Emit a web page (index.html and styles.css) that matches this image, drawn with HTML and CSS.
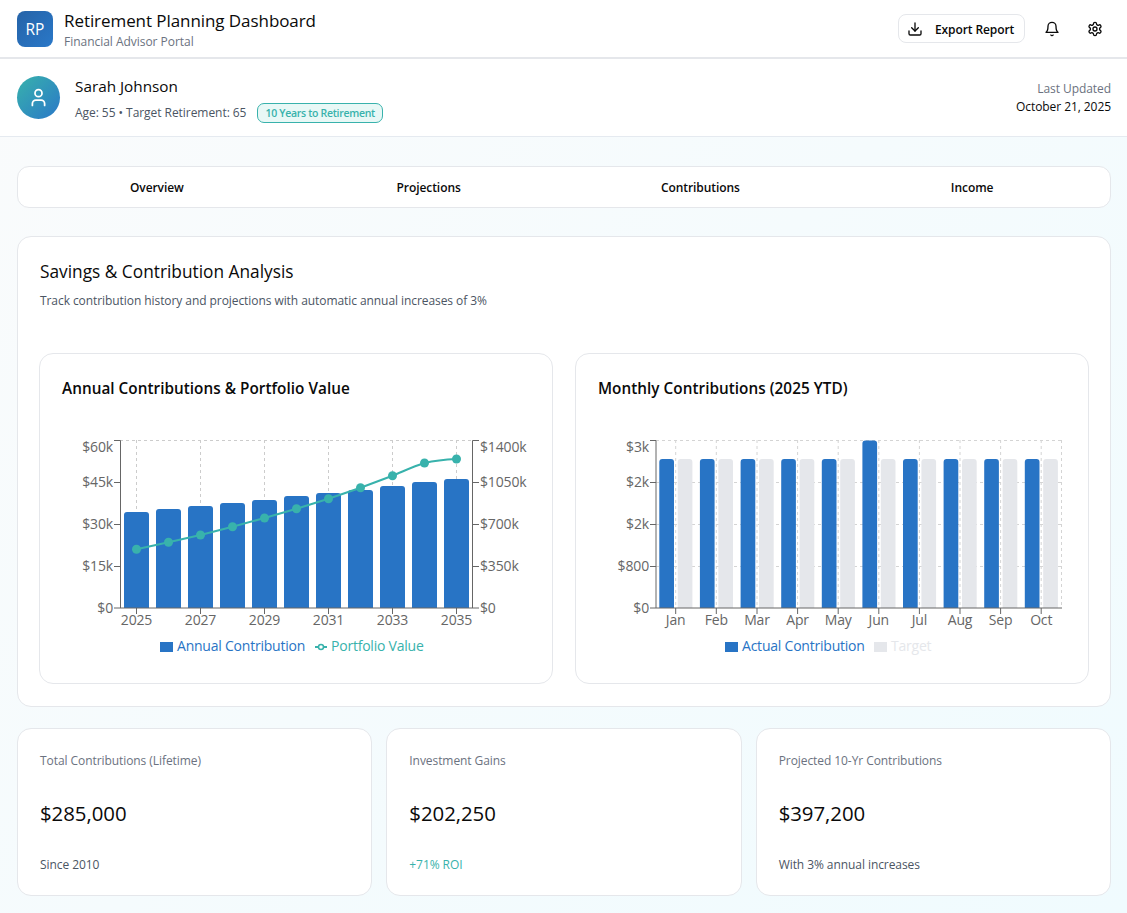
FILE: index.html
```html
<!DOCTYPE html>
<html lang="en">
<head>
<meta charset="utf-8">
<title>Retirement Planning Dashboard</title>
<link rel="stylesheet" href="styles.css">
</head>
<body>
<header class="topbar">
  <div class="brand">
    <div class="logo">RP</div>
    <div class="brand-text">
      <h1>Retirement Planning Dashboard</h1>
      <p>Financial Advisor Portal</p>
    </div>
  </div>
  <div class="actions">
    <button class="export">
      <svg class="icon" viewBox="0 0 24 24"><path d="M21 15v4a2 2 0 0 1-2 2H5a2 2 0 0 1-2-2v-4"/><polyline points="7 10 12 15 17 10"/><line x1="12" y1="15" x2="12" y2="3"/></svg>
      <span class="export-label">Export Report</span>
    </button>
    <button class="icon-btn">
      <svg class="icon" viewBox="0 0 24 24"><path d="M6 8a6 6 0 0 1 12 0c0 7 3 9 3 9H3s3-2 3-9"/><path d="M10.3 21a1.94 1.94 0 0 0 3.4 0"/></svg>
    </button>
    <button class="icon-btn">
      <svg class="icon" viewBox="0 0 24 24"><path d="M12.22 2h-.44a2 2 0 0 0-2 2v.18a2 2 0 0 1-1 1.73l-.43.25a2 2 0 0 1-2 0l-.15-.08a2 2 0 0 0-2.73.73l-.22.38a2 2 0 0 0 .73 2.73l.15.1a2 2 0 0 1 1 1.72v.51a2 2 0 0 1-1 1.74l-.15.09a2 2 0 0 0-.73 2.73l.22.38a2 2 0 0 0 2.73.73l.15-.08a2 2 0 0 1 2 0l.43.25a2 2 0 0 1 1 1.73V20a2 2 0 0 0 2 2h.44a2 2 0 0 0 2-2v-.18a2 2 0 0 1 1-1.73l.43-.25a2 2 0 0 1 2 0l.15.08a2 2 0 0 0 2.73-.73l.22-.39a2 2 0 0 0-.73-2.73l-.15-.08a2 2 0 0 1-1-1.74v-.5a2 2 0 0 1 1-1.74l.15-.09a2 2 0 0 0 .73-2.73l-.22-.38a2 2 0 0 0-2.73-.73l-.15.08a2 2 0 0 1-2 0l-.43-.25a2 2 0 0 1-1-1.73V4a2 2 0 0 0-2-2z"/><circle cx="12" cy="12" r="3"/></svg>
    </button>
  </div>
</header>

<section class="client">
  <div class="client-main">
    <div class="avatar">
      <svg class="avatar-icon" viewBox="0 0 24 24"><path d="M19 21v-2a4 4 0 0 0-4-4H9a4 4 0 0 0-4 4v2"/><circle cx="12" cy="7" r="4"/></svg>
    </div>
    <div class="client-text">
      <h2>Sarah Johnson</h2>
      <div class="client-meta">
        <span>Age: 55 • Target Retirement: 65</span>
        <span class="badge">10 Years to Retirement</span>
      </div>
    </div>
  </div>
  <div class="updated">
    <span class="updated-label">Last Updated</span>
    <span class="updated-date">October 21, 2025</span>
  </div>
</section>

<main class="content">
  <nav class="tabs">
    <a class="tab">Overview</a>
    <a class="tab">Projections</a>
    <a class="tab">Contributions</a>
    <a class="tab">Income</a>
  </nav>

  <section class="panel">
    <h3 class="panel-title">Savings &amp; Contribution Analysis</h3>
    <p class="panel-sub">Track contribution history and projections with automatic annual increases of 3%</p>
    <div class="charts">
      <article class="chart-card">
        <h4>Annual Contributions &amp; Portfolio Value</h4>
        <svg class="chart" viewBox="62 420 470 250">
          <g class="grid">
            <line x1="120" y1="440.5" x2="473" y2="440.5"/>
            <line x1="136.5" y1="440" x2="136.5" y2="608"/>
            <line x1="200.5" y1="440" x2="200.5" y2="608"/>
            <line x1="264.5" y1="440" x2="264.5" y2="608"/>
            <line x1="328.5" y1="440" x2="328.5" y2="608"/>
            <line x1="392.5" y1="440" x2="392.5" y2="608"/>
            <line x1="456.5" y1="440" x2="456.5" y2="608"/>
          </g>
          <g class="bar-blue">
            <path d="M124 608V515a3 3 0 0 1 3-3h19a3 3 0 0 1 3 3v93z"/>
            <path d="M156 608V512a3 3 0 0 1 3-3h19a3 3 0 0 1 3 3v96z"/>
            <path d="M188 608V509a3 3 0 0 1 3-3h19a3 3 0 0 1 3 3v99z"/>
            <path d="M220 608V506a3 3 0 0 1 3-3h19a3 3 0 0 1 3 3v102z"/>
            <path d="M252 608V503a3 3 0 0 1 3-3h19a3 3 0 0 1 3 3v105z"/>
            <path d="M284 608V499a3 3 0 0 1 3-3h19a3 3 0 0 1 3 3v109z"/>
            <path d="M316 608V496a3 3 0 0 1 3-3h19a3 3 0 0 1 3 3v112z"/>
            <path d="M348 608V493a3 3 0 0 1 3-3h19a3 3 0 0 1 3 3v115z"/>
            <path d="M380 608V489a3 3 0 0 1 3-3h19a3 3 0 0 1 3 3v119z"/>
            <path d="M412 608V485a3 3 0 0 1 3-3h19a3 3 0 0 1 3 3v123z"/>
            <path d="M444 608V482a3 3 0 0 1 3-3h19a3 3 0 0 1 3 3v126z"/>
          </g>
          <g class="axis">
            <path d="M114 440.5h6.5V608M114 482.5h6M114 524.5h6M114 566.5h6M114 608h359M136.5 608v6M200.5 608v6M264.5 608v6M328.5 608v6M392.5 608v6M456.5 608v6"/>
            <path d="M479 440.5h-6.5V608M473 482.5h6M473 524.5h6M473 566.5h6M473 608h6"/>
          </g>
          <path class="line-teal" d="M136.5 549.3L168.5 542.3L200.5 535L232.5 526.7L264.5 518L296.5 508.7L328.5 498.7L360.5 487.7L392.5 475.7C403 471.5 413 466.5 424.5 463C435 460.5 445 459.5 456.5 459"/>
          <g class="dot-teal">
            <circle cx="136.5" cy="549.3" r="4.5"/><circle cx="168.5" cy="542.3" r="4.5"/><circle cx="200.5" cy="535" r="4.5"/><circle cx="232.5" cy="526.7" r="4.5"/><circle cx="264.5" cy="518" r="4.5"/><circle cx="296.5" cy="508.7" r="4.5"/><circle cx="328.5" cy="498.7" r="4.5"/><circle cx="360.5" cy="487.7" r="4.5"/><circle cx="392.5" cy="475.7" r="4.5"/><circle cx="424.5" cy="463" r="4.5"/><circle cx="456.5" cy="459" r="4.5"/>
          </g>
          <g class="tick end">
            <text x="113" y="452">$60k</text><text x="113" y="487">$45k</text><text x="113" y="529">$30k</text><text x="113" y="571">$15k</text><text x="113" y="613">$0</text>
          </g>
          <g class="tick">
            <text x="480" y="452">$1400k</text><text x="480" y="487">$1050k</text><text x="480" y="529">$700k</text><text x="480" y="571">$350k</text><text x="480" y="613">$0</text>
          </g>
          <g class="tick mid">
            <text x="136.5" y="625">2025</text><text x="200.5" y="625">2027</text><text x="264.5" y="625">2029</text><text x="328.5" y="625">2031</text><text x="392.5" y="625">2033</text><text x="456.5" y="625">2035</text>
          </g>
          <rect class="swatch-blue" x="160" y="642" width="13" height="10"/>
          <text class="legend legend-blue" x="177" y="651">Annual Contribution</text>
          <line class="line-teal" x1="315" y1="647" x2="327" y2="647"/>
          <circle class="legend-dot" cx="321" cy="647" r="2.5"/>
          <text class="legend legend-teal" x="331" y="651">Portfolio Value</text>
        </svg>
      </article>

      <article class="chart-card">
        <h4>Monthly Contributions (2025 YTD)</h4>
        <svg class="chart" viewBox="598 420 470 250">
          <g class="grid grid-soft">
            <path d="M656 440.5H1061.5M656 482.5H1061.5M656 524.5H1061.5M656 566.5H1061.5M675.7 440V608M716.3 440V608M757 440V608M797.6 440V608M838.2 440V608M878.8 440V608M919.4 440V608M960 440V608M1000.6 440V608M1041.2 440V608M1061.5 440V608"/>
          </g>
          <g class="bar-blue">
            <path d="M659.3 608V462a3 3 0 0 1 3-3h8.7a3 3 0 0 1 3 3v146z"/>
            <path d="M699.9 608V462a3 3 0 0 1 3-3h8.7a3 3 0 0 1 3 3v146z"/>
            <path d="M740.6 608V462a3 3 0 0 1 3-3h8.7a3 3 0 0 1 3 3v146z"/>
            <path d="M781.2 608V462a3 3 0 0 1 3-3h8.7a3 3 0 0 1 3 3v146z"/>
            <path d="M821.8 608V462a3 3 0 0 1 3-3h8.7a3 3 0 0 1 3 3v146z"/>
            <path d="M862.4 608V443.5a3 3 0 0 1 3-3h8.7a3 3 0 0 1 3 3V608z"/>
            <path d="M903 608V462a3 3 0 0 1 3-3h8.7a3 3 0 0 1 3 3v146z"/>
            <path d="M943.6 608V462a3 3 0 0 1 3-3h8.7a3 3 0 0 1 3 3v146z"/>
            <path d="M984.2 608V462a3 3 0 0 1 3-3h8.7a3 3 0 0 1 3 3v146z"/>
            <path d="M1024.8 608V462a3 3 0 0 1 3-3h8.7a3 3 0 0 1 3 3v146z"/>
          </g>
          <g class="bar-grey">
            <path d="M677.7 608V462a3 3 0 0 1 3-3h8.7a3 3 0 0 1 3 3v146z"/>
            <path d="M718.3 608V462a3 3 0 0 1 3-3h8.7a3 3 0 0 1 3 3v146z"/>
            <path d="M759 608V462a3 3 0 0 1 3-3h8.7a3 3 0 0 1 3 3v146z"/>
            <path d="M799.6 608V462a3 3 0 0 1 3-3h8.7a3 3 0 0 1 3 3v146z"/>
            <path d="M840.2 608V462a3 3 0 0 1 3-3h8.7a3 3 0 0 1 3 3v146z"/>
            <path d="M880.8 608V462a3 3 0 0 1 3-3h8.7a3 3 0 0 1 3 3v146z"/>
            <path d="M921.4 608V462a3 3 0 0 1 3-3h8.7a3 3 0 0 1 3 3v146z"/>
            <path d="M962 608V462a3 3 0 0 1 3-3h8.7a3 3 0 0 1 3 3v146z"/>
            <path d="M1002.6 608V462a3 3 0 0 1 3-3h8.7a3 3 0 0 1 3 3v146z"/>
            <path d="M1043.2 608V462a3 3 0 0 1 3-3h8.7a3 3 0 0 1 3 3v146z"/>
          </g>
          <g class="axis">
            <path d="M650 440.5h6V608M650 482.5h6M650 524.5h6M650 566.5h6M650 608H1062M675.7 608v6M716.3 608v6M757 608v6M797.6 608v6M838.2 608v6M878.8 608v6M919.4 608v6M960 608v6M1000.6 608v6M1041.2 608v6"/>
          </g>
          <g class="tick end">
            <text x="649" y="452">$3k</text><text x="649" y="487">$2k</text><text x="649" y="529">$2k</text><text x="649" y="571">$800</text><text x="649" y="613">$0</text>
          </g>
          <g class="tick mid">
            <text x="675.7" y="625">Jan</text><text x="716.3" y="625">Feb</text><text x="757" y="625">Mar</text><text x="797.6" y="625">Apr</text><text x="838.2" y="625">May</text><text x="878.8" y="625">Jun</text><text x="919.4" y="625">Jul</text><text x="960" y="625">Aug</text><text x="1000.6" y="625">Sep</text><text x="1041.2" y="625">Oct</text>
          </g>
          <rect class="swatch-blue" x="725" y="642" width="13" height="10"/>
          <text class="legend legend-blue" x="742" y="651">Actual Contribution</text>
          <rect class="swatch-grey" x="874" y="642" width="13" height="10"/>
          <text class="legend legend-grey" x="891" y="651">Target</text>
        </svg>
      </article>
    </div>
  </section>

  <section class="stats">
    <article class="stat">
      <p class="stat-label">Total Contributions (Lifetime)</p>
      <p class="stat-value">$285,000</p>
      <p class="stat-note">Since 2010</p>
    </article>
    <article class="stat">
      <p class="stat-label">Investment Gains</p>
      <p class="stat-value">$202,250</p>
      <p class="stat-note stat-good">+71% ROI</p>
    </article>
    <article class="stat">
      <p class="stat-label">Projected 10-Yr Contributions</p>
      <p class="stat-value">$397,200</p>
      <p class="stat-note">With 3% annual increases</p>
    </article>
  </section>
</main>
</body>
</html>
```
FILE: styles.css
```css
* { box-sizing: border-box; }
html, body { margin: 0; padding: 0; }
body {
  font-family: "Open Sans", "Noto Sans", "Liberation Sans", sans-serif;
  color: #0a0a0a;
  background: linear-gradient(135deg, #fafbfc 0%, #f0fbfe 100%);
  min-height: 913px;
  letter-spacing: -0.07px;
}
h1, h2, h3, h4, p { margin: 0; font-weight: 400; }

.topbar {
  height: 59px;
  background: #fff;
  border-bottom: 2px solid #e5e7eb;
  padding: 0 11px 0 17px;
  display: flex;
  align-items: center;
  justify-content: space-between;
}
.brand { display: flex; align-items: center; gap: 11px; }
.logo {
  width: 36px; height: 36px;
  border-radius: 8px;
  background: linear-gradient(135deg, #2563a8, #2a78c8);
  color: #fff;
  font-size: 15.5px;
  display: flex; align-items: center; justify-content: center;
}
.brand-text { padding-top: 2px; }
.brand-text h1 { font-size: 17px; line-height: 24px; letter-spacing: -0.07px; }
.brand-text p { font-size: 12px; line-height: 18px; color: #6b7280; letter-spacing: -0.03px; }
.actions { display: flex; align-items: center; }
.export {
  height: 29px;
  width: 127px;
  border: 1px solid #e5e7eb;
  border-radius: 8px;
  background: #fff;
  padding: 0 0 0 8px;
  margin-right: 5px;
  display: flex; align-items: center; gap: 12px;
  font: 600 12px "Open Sans", sans-serif;
  letter-spacing: -0.1px;
  color: #0a0a0a;
}
.export-label { padding-top: 1px; }
.icon-btn {
  width: 43px; height: 29px;
  border: 0; background: transparent; padding: 0;
  display: flex; align-items: center; justify-content: center;
}
.icon {
  width: 16px; height: 16px;
  fill: none; stroke: #0a0a0a; stroke-width: 2;
  stroke-linecap: round; stroke-linejoin: round;
}

.client {
  height: 78px;
  background: #fff;
  border-bottom: 1px solid #e5eaf0;
  padding: 0 16px 0 17px;
  display: flex;
  align-items: center;
  justify-content: space-between;
}
.client-main { display: flex; align-items: center; gap: 15px; }
.avatar {
  width: 43px; height: 43px;
  border-radius: 50%;
  background: linear-gradient(135deg, #38b2ac, #2a78c8);
  display: flex; align-items: center; justify-content: center;
}
.avatar-icon {
  width: 21px; height: 21px;
  fill: none; stroke: #fff; stroke-width: 2;
  stroke-linecap: round; stroke-linejoin: round;
}
.client-text h2 { font-size: 15.3px; line-height: 22px; margin-bottom: 5px; letter-spacing: 0; }
.client-meta {
  display: flex; align-items: center; gap: 11px;
  font-size: 12px; line-height: 20px; color: #4b5563;
  padding-top: 1px;
  margin-bottom: -2px;
  letter-spacing: -0.05px;
}
.badge {
  height: 20px;
  padding: 0 7px;
  border: 1px solid #38b2ac;
  border-radius: 7px;
  background: #e8f8f6;
  color: #38b2ac;
  font-size: 10.5px;
  font-weight: 600;
  line-height: 18px;
  letter-spacing: -0.3px;
}
.updated { display: flex; flex-direction: column; align-items: flex-end; }
.updated-label { font-size: 12px; line-height: 18px; color: #6b7280; }
.updated-date { font-size: 12px; line-height: 18px; color: #0a0a0a; }

.content { padding: 29px 16px 17px 17px; }
.tabs {
  height: 42px;
  background: #fff;
  border: 1px solid #e5e7eb;
  border-radius: 12px;
  padding: 0 2px 0 3px;
  display: grid;
  grid-template-columns: repeat(4, 1fr);
  align-items: center;
  text-align: center;
  margin-bottom: 28px;
}
.tab { font-size: 12px; font-weight: 600; color: #0a0a0a; }

.panel {
  height: 471px;
  background: #fff;
  border: 1px solid #e5e7eb;
  border-radius: 14px;
  padding: 22px 21px;
  margin-bottom: 21px;
}
.panel-title { font-size: 17.3px; line-height: 26px; margin: 0 0 7px 1px; letter-spacing: 0; }
.panel-sub { font-size: 12px; line-height: 18px; color: #4b5563; margin: 0 0 43px 1px; }
.charts { display: grid; grid-template-columns: minmax(0, 1fr) minmax(0, 1fr); gap: 22px; }
.chart-card {
  height: 331px;
  border: 1px solid #e5e7eb;
  border-radius: 14px;
  padding: 22px 22px 0;
}
.chart-card h4 {
  font-size: 15.3px; font-weight: 600; line-height: 24px;
  margin-bottom: 20px;
  letter-spacing: 0.03px;
}
.chart { display: block; width: 470px; height: 250px; }
.grid line, .grid path { stroke: #ccc; stroke-width: 1; stroke-dasharray: 3 3; fill: none; }
.grid-soft path { stroke: #d4d4d4; }
.axis path { stroke: #666; stroke-width: 1; fill: none; }
.bar-blue path { fill: #2874c5; }
.bar-grey path { fill: #e5e7eb; }
.line-teal { fill: none; stroke: #38b2ac; stroke-width: 2; }
.dot-teal circle { fill: #38b2ac; }
.legend-dot { fill: #fff; stroke: #38b2ac; stroke-width: 1.5; }
.tick text { font-size: 14px; fill: #666; letter-spacing: -0.15px; }
.tick.end text { text-anchor: end; }
.tick.mid text { text-anchor: middle; }
.swatch-blue { fill: #2874c5; }
.swatch-grey { fill: #e5e7eb; }
.legend { font-size: 14px; letter-spacing: -0.22px; }
.legend-blue { fill: #2874c5; }
.legend-teal { fill: #38b2ac; }
.legend-grey { fill: #e5e7eb; }

.stats { display: grid; grid-template-columns: repeat(3, 1fr); gap: 14px; }
.stat {
  height: 168px;
  background: #fff;
  border: 1px solid #e5e7eb;
  border-radius: 14px;
  padding: 23px 22px 21px;
  display: flex; flex-direction: column; justify-content: space-between;
}
.stat-label { font-size: 12px; line-height: 18px; color: #6b7280; }
.stat-value { font-size: 20.4px; line-height: 30px; letter-spacing: -0.05px; margin-bottom: 1px; }
.stat-note { font-size: 12px; line-height: 18px; color: #4b5563; }
.stat-good { color: #38b2ac; }
```
